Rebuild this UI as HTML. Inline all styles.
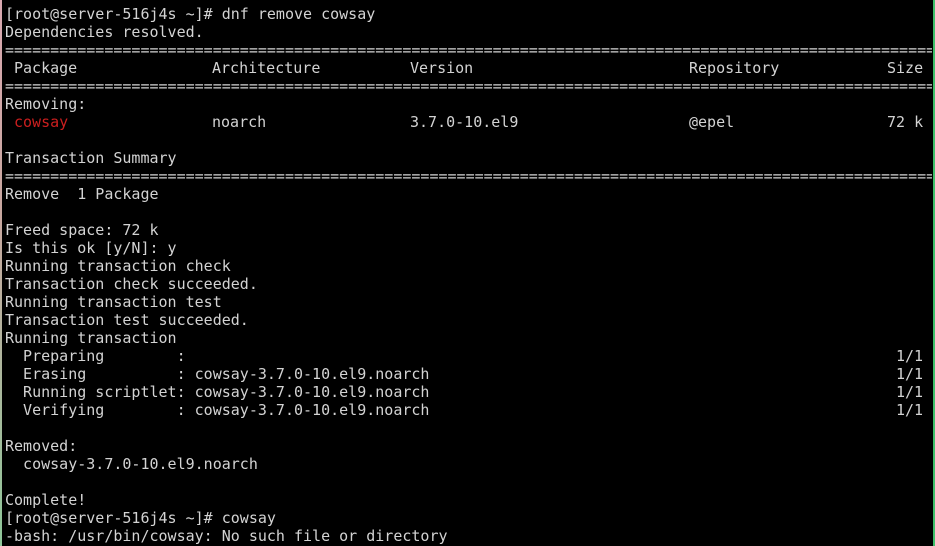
<!DOCTYPE html>
<html><head><style>
html,body{margin:0;padding:0;background:#000;}
#t{position:relative;width:935px;height:546px;background:#000;overflow:hidden;font-family:"DejaVu Sans Mono","Liberation Mono",monospace;font-size:15px;color:#d3d3d3;}
#lb{position:absolute;left:0;top:0;width:2px;height:546px;background:linear-gradient(#d9a8b0,#c8a8a0 40%,#8fc79a);}
#rb{position:absolute;right:0;top:0;width:2px;height:546px;background:#3fbf6a;}
#in{position:absolute;left:0;top:-1px;width:935px;height:547px;}
.l{position:absolute;left:5px;height:18px;line-height:18px;white-space:pre;}
.s{position:absolute;white-space:pre;}
.r{color:#cc1f1f;}
</style></head><body><div id="t">
<div id="lb"></div><div id="rb"></div>
<div id="in">
<div class="l" style="top:6px">[root@server-516j4s ~]# dnf remove cowsay</div>
<div class="l" style="top:24px">Dependencies resolved.</div>
<div class="l" style="top:42px;width:927px;overflow:hidden">=======================================================================================================</div>
<div class="l" style="top:60px;width:930px"><span class="s" style="left:9px">Package</span><span class="s" style="left:207px">Architecture</span><span class="s" style="left:405px">Version</span><span class="s" style="left:684px">Repository</span><span class="s" style="left:882px">Size</span></div>
<div class="l" style="top:78px;width:927px;overflow:hidden">=======================================================================================================</div>
<div class="l" style="top:96px">Removing:</div>
<div class="l" style="top:114px;width:930px"><span class="s r" style="left:9px">cowsay</span><span class="s" style="left:207px">noarch</span><span class="s" style="left:405px">3.7.0-10.el9</span><span class="s" style="left:684px">@epel</span><span class="s" style="left:882px">72 k</span></div>
<div class="l" style="top:150px">Transaction Summary</div>
<div class="l" style="top:168px;width:927px;overflow:hidden">=======================================================================================================</div>
<div class="l" style="top:186px">Remove  1 Package</div>
<div class="l" style="top:222px">Freed space: 72 k</div>
<div class="l" style="top:240px">Is this ok [y/N]: y</div>
<div class="l" style="top:258px">Running transaction check</div>
<div class="l" style="top:276px">Transaction check succeeded.</div>
<div class="l" style="top:294px">Running transaction test</div>
<div class="l" style="top:312px">Transaction test succeeded.</div>
<div class="l" style="top:330px">Running transaction</div>
<div class="l" style="top:348px;width:930px"><span class="s" style="left:0">  Preparing        :</span><span class="s" style="left:891px">1/1</span></div>
<div class="l" style="top:366px;width:930px"><span class="s" style="left:0">  Erasing          : cowsay-3.7.0-10.el9.noarch</span><span class="s" style="left:891px">1/1</span></div>
<div class="l" style="top:384px;width:930px"><span class="s" style="left:0">  Running scriptlet: cowsay-3.7.0-10.el9.noarch</span><span class="s" style="left:891px">1/1</span></div>
<div class="l" style="top:402px;width:930px"><span class="s" style="left:0">  Verifying        : cowsay-3.7.0-10.el9.noarch</span><span class="s" style="left:891px">1/1</span></div>
<div class="l" style="top:438px">Removed:</div>
<div class="l" style="top:456px">  cowsay-3.7.0-10.el9.noarch</div>
<div class="l" style="top:492px">Complete!</div>
<div class="l" style="top:510px">[root@server-516j4s ~]# cowsay</div>
<div class="l" style="top:528px">-bash: /usr/bin/cowsay: No such file or directory</div>
</div>
</div></body></html>
